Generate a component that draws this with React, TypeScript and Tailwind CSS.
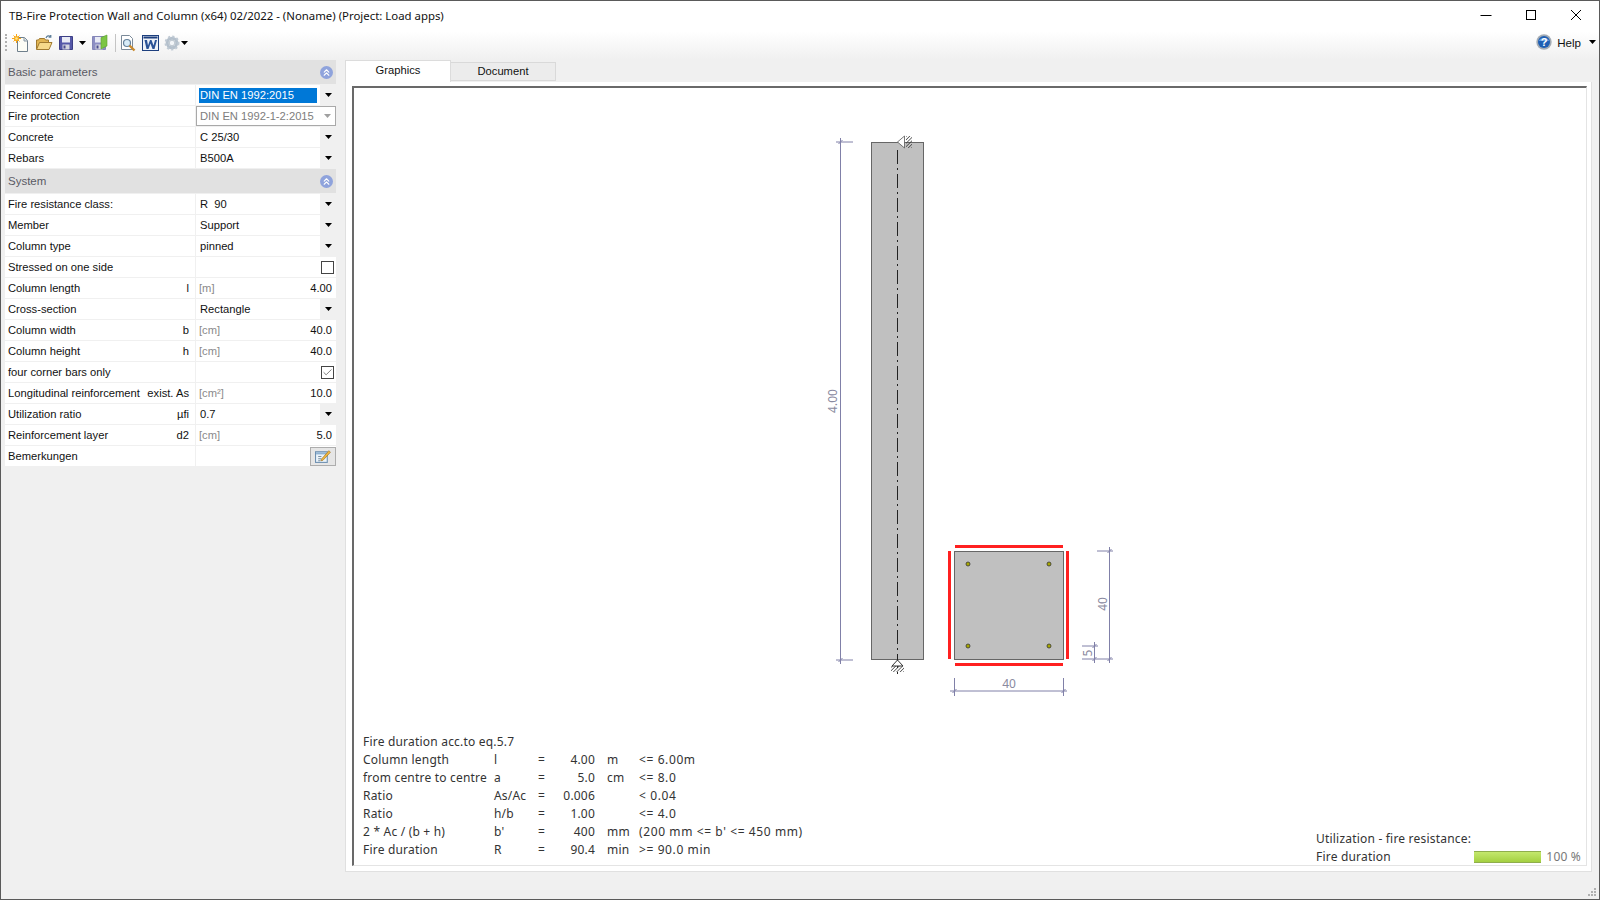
import { Check, ChevronsUp } from "lucide-react";

type Row = {
    label: string;
    sym?: string;
    unit?: string;
    value?: string;
    kind?: "select" | "selected" | "disabled" | "number" | "check" | "edit";
    checked?: boolean;
};

const basicRows: Row[] = [
    { label: "Reinforced Concrete", value: "DIN EN 1992:2015", kind: "selected" },
    { label: "Fire protection", value: "DIN EN 1992-1-2:2015", kind: "disabled" },
    { label: "Concrete", value: "C 25/30", kind: "select" },
    { label: "Rebars", value: "B500A", kind: "select" },
];

const systemRows: Row[] = [
    { label: "Fire resistance class:", value: "R  90", kind: "select" },
    { label: "Member", value: "Support", kind: "select" },
    { label: "Column type", value: "pinned", kind: "select" },
    { label: "Stressed on one side", kind: "check" },
    { label: "Column length", sym: "l", unit: "[m]", value: "4.00", kind: "number" },
    { label: "Cross-section", value: "Rectangle", kind: "select" },
    { label: "Column width", sym: "b", unit: "[cm]", value: "40.0", kind: "number" },
    { label: "Column height", sym: "h", unit: "[cm]", value: "40.0", kind: "number" },
    { label: "four corner bars only", kind: "check", checked: true },
    { label: "Longitudinal reinforcement", sym: "exist. As", unit: "[cm²]", value: "10.0", kind: "number" },
    { label: "Utilization ratio", sym: "µfi", value: "0.7", kind: "select" },
    { label: "Reinforcement layer", sym: "d2", unit: "[cm]", value: "5.0", kind: "number" },
    { label: "Bemerkungen", kind: "edit" },
];

const results = [
    ["Column length", "l", "=", "4.00", "m", "<= 6.00m"],
    ["from centre to centre", "a", "=", "5.0", "cm", "<= 8.0"],
    ["Ratio", "As/Ac", "=", "0.006", "", "< 0.04"],
    ["Ratio", "h/b", "=", "1.00", "", "<= 4.0"],
    ["2 * Ac / (b + h)", "b'", "=", "400", "mm", "(200 mm <= b' <= 450 mm)"],
    ["Fire duration", "R", "=", "90.4", "min", ">= 90.0 min"],
];

function Caret({ light }: { light?: boolean }) {
    return (
        <svg width="7" height="4" viewBox="0 0 7 4">
            <path d="M0 0h7L3.5 4z" fill={light ? "#a0a0a0" : "#000"} />
        </svg>
    );
}

function NewIcon() {
    return (
        <svg width="18" height="18" viewBox="0 0 18 18">
            <path d="M5.5 3.5h7l3 3v11h-10z" fill="#fdfdf6" stroke="#6f7f8c" />
            <path d="M12 3.5v3.5h3.5" fill="#dfe6ea" stroke="#8a98a3" />
            <circle cx="4.5" cy="4.5" r="2.6" fill="#f7b521" />
            <path d="M4.5 0v9M0 4.5h9M1.5 1.5l6 6M7.5 1.5l-6 6" stroke="#f9a51a" strokeWidth="1" />
            <circle cx="4.5" cy="4.5" r="1.3" fill="#ffe98a" />
        </svg>
    );
}

function OpenIcon() {
    return (
        <svg width="18" height="18" viewBox="0 0 18 18">
            <path d="M1.5 15V6h2l1-1.5h5L10.500 6h3v9z" fill="#e2b654" stroke="#a07a30" />
            <path d="M1.500 15.500l3-7h12.500l-3 7z" fill="#f6d98a" stroke="#a07a30" />
            <path d="M11 4c1-2.500 3-2.800 4.500-1.500M15.800 1v2.200h-2.200" fill="none" stroke="#5e7f9a" strokeWidth="1.200" />
        </svg>
    );
}

function SaveIcon({ green }: { green?: boolean }) {
    return (
        <svg width="18" height="18" viewBox="0 0 18 18">
            <path d="M1.500 2.500h13v13h-13z" fill={green ? "#8d8fc4" : "#5558a8"} stroke={green ? "#8587b8" : "#3d3f86"} />
            <rect x="4" y="3" width="8" height="5.500" fill="#e9ebf5" />
            <rect x="4.500" y="10.500" width="7" height="5" fill="#d4d5de" />
            <rect x="5.500" y="11.500" width="2" height="3" fill="#4a4c90" />
            {green && <path d="M10 3.500l6-2.500v11l-6 3z" fill="#7cc544" stroke="#5b9e2c" strokeWidth="0.600" />}
        </svg>
    );
}

function PreviewIcon() {
    return (
        <svg width="18" height="18" viewBox="0 0 18 18">
            <path d="M2.500 1.500h8l3 3v11h-11z" fill="#fff" stroke="#7b8a99" />
            <circle cx="8" cy="9" r="3.500" fill="#d8ecf8" stroke="#64809a" strokeWidth="1.200" />
            <path d="M10.500 11.500l5 5" stroke="#c98a2e" strokeWidth="2.400" />
        </svg>
    );
}

function WordIcon() {
    return (
        <svg width="17" height="16" viewBox="0 0 17 16">
            <rect x="0.500" y="0.500" width="16" height="15" fill="#eef2f8" stroke="#1d3f7e" />
            <rect x="1.500" y="1.500" width="14" height="2" fill="#1d3f7e" />
            <path d="M2.500 5l2 9h2l2-5.500 2 5.500h2l2.500-9h-2l-1.500 5.500-2-5.500h-1.500l-2 5.500-1-5.500z" fill="#2a5296" />
        </svg>
    );
}

function GearIcon() {
    return (
        <svg width="16" height="16" viewBox="0 0 16 16">
            <circle cx="8" cy="8" r="4.800" fill="none" stroke="#b4c0cc" strokeWidth="3" />
            <circle cx="8" cy="8" r="6.500" fill="none" stroke="#c0cad4" strokeWidth="2" strokeDasharray="2.200 2.100" />
            <circle cx="8" cy="8" r="2.800" fill="#f2f5f8" stroke="#93a2b2" strokeWidth="0.600" />
        </svg>
    );
}

function HelpIcon() {
    return (
        <svg width="16" height="16" viewBox="0 0 16 16">
            <circle cx="8" cy="8" r="7.700" fill="#a3abb4" />
            <circle cx="8" cy="8" r="6" fill="#1f5fb4" />
            <path d="M2.800 7a5.400 4.200 0 0 1 10.400 0z" fill="#5f9be0" />
            <text x="8" y="12" textAnchor="middle" fontSize="11" fontWeight="700" fill="#fff" fontFamily="'Liberation Sans', sans-serif">?</text>
        </svg>
    );
}

function EditIcon() {
    return (
        <svg width="16" height="14" viewBox="0 0 15 13">
            <rect x="0.500" y="2.500" width="11" height="10" fill="#eaf3fa" stroke="#6d8fb0" />
            <rect x="1" y="3" width="10" height="2" fill="#8fb2d2" />
            <path d="M3 7h3M3 9h3M3 11h2" stroke="#7a8fa3" />
            <path d="M6 9.500L13 1.500l1.500 1.500L7.500 10.500 5.500 11z" fill="#f1b73c" stroke="#9b6f24" strokeWidth="0.600" />
        </svg>
    );
}

function SectionHeader({ title }: { title: string }) {
    return (
        <div className="flex h-6 items-center justify-between bg-[#e1e1e1] pl-[3px] pr-[3px] text-[11.5px] text-[#5a5a64]">
            <span className="pt-px">{title}</span>
            <span className="flex h-[13px] w-[13px] items-center justify-center rounded-full bg-[#8fa3dc] text-white">
                <ChevronsUp size={11} strokeWidth={2.5} />
            </span>
        </div>
    );
}

function PropValue({ row }: { row: Row }) {
    if (row.kind === "selected") {
        return (
            <div className="flex h-full flex-1 items-center">
                <div className="ml-[3px] flex h-[15px] flex-1 items-center bg-[#0078d7] pl-[1px] text-white">{row.value}</div>
                <div className="ml-[3px] flex h-full w-4 items-center justify-center bg-[#f0f0f0]"><Caret /></div>
            </div>
        );
    }
    if (row.kind === "disabled") {
        return (
            <div className="flex h-full flex-1 items-center border border-[#a9a9a9] pl-[3px] text-[#7d7d7d]">
                <span className="flex-1 whitespace-nowrap">{row.value}</span>
                <span className="flex w-4 justify-center"><Caret light /></span>
            </div>
        );
    }
    if (row.kind === "select") {
        return (
            <div className="flex h-full flex-1 items-center pl-[4px]">
                <span className="flex-1 whitespace-pre pt-px">{row.value}</span>
                <div className="flex h-full w-4 items-center justify-center bg-[#f0f0f0]"><Caret /></div>
            </div>
        );
    }
    if (row.kind === "number") {
        return (
            <div className="flex flex-1 items-center justify-between pl-[3px] pr-[4px]">
                <span className="text-[#8a8a8a]">{row.unit}</span>
                <span>{row.value}</span>
            </div>
        );
    }
    if (row.kind === "check") {
        return (
            <div className="flex flex-1 justify-end pr-[2px]">
                <span className="flex h-[13px] w-[13px] items-center justify-center border border-[#444] bg-white text-[#444]">
                    {row.checked && <Check size={11} strokeWidth={1.5} />}
                </span>
            </div>
        );
    }
    return (
        <div className="flex h-full flex-1 items-center justify-end">
            <span className="flex h-[19px] w-[26px] items-center justify-center border border-[#adadad] bg-[#e6e6e6]"><EditIcon /></span>
        </div>
    );
}

function PropRow({ row }: { row: Row }) {
    return (
        <div className="flex h-5 items-center bg-white text-[11.2px] text-[#111]">
            <div className="flex h-full w-[190px] items-center justify-between whitespace-pre pl-[3px] pr-[6px]">
                <span>{row.label}</span>
                {row.sym && <span>{row.sym}</span>}
            </div>
            <div className="h-full w-px bg-[#f0f0f0]" />
            <PropValue row={row} />
        </div>
    );
}

function Drawing() {
    const dim = "#8080a8";
    const axis = [];
    for (let y = 150; y < 655; y += 24) {
        axis.push(`M897.5 ${y}v14`, `M897.5 ${y + 18}v2`);
    }
    const dimText = { fill: "#8a8aa0", fontSize: 12, fontFamily: "'Noto Sans', sans-serif" };
    return (
        <svg className="block" width="1232" height="640" viewBox="354 88 1232 640">
            <defs>
                <pattern id="hatch" width="2.400" height="2.400" patternUnits="userSpaceOnUse" patternTransform="rotate(45)">
                    <path d="M0 0v2.400" stroke="#333" strokeWidth="1.300" />
                </pattern>
            </defs>
            {/* column elevation */}
            <rect x="871.500" y="142.500" width="52" height="517" fill="#c0c0c0" stroke="#666" />
            <path d={axis.join("")} stroke="#222" fill="none" />
            <path d="M897.500 142l7-6v12z" fill="#fff" stroke="#555" strokeWidth="0.800" />
            <rect x="906" y="136" width="6" height="12" fill="url(#hatch)" />
            <path d="M897.500 660l-5.500 6h11z" fill="#fff" stroke="#333" />
            <rect x="891" y="666" width="13" height="6" fill="url(#hatch)" />
            {/* length dimension */}
            <path d="M840.500 138v526M836 142h17M836 660h17" stroke={dim} fill="none" />
            <path d="M838.500 144l4-4M838.500 662l4-4" stroke={dim} />
            <text {...dimText} transform="translate(837 401) rotate(-90)" textAnchor="middle">4.00</text>
            {/* section */}
            <rect x="954.500" y="551.500" width="109" height="108" fill="#c0c0c0" stroke="#666" />
            <path d="M955 545h108v3h-108zM955 663h108v3h-108zM948 551h3v108h-3zM1066 551h3v108h-3z" fill="#ff2020" />
            {[[968, 564], [1049, 564], [968, 646], [1049, 646]].map(([x, y]) => (
                <circle key={`${x}-${y}`} cx={x} cy={y} r="2" fill="#a8a800" stroke="#333" strokeWidth="0.800" />
            ))}
            {/* section dimensions */}
            <path d="M1109.500 547v116M1097 551h16M1094.500 642v21M1082 646h16M1082 659h31" stroke={dim} fill="none" />
            <path d="M1107.500 553l4-4M1107.500 661l4-4M1092.500 648l4-4M1092.500 661l4-4" stroke={dim} />
            <text {...dimText} transform="translate(1107 604) rotate(-90)" textAnchor="middle">40</text>
            <text {...dimText} transform="translate(1092 653) rotate(-90)" textAnchor="middle">5</text>
            <path d="M954.500 678v18M1063.500 678v18M950 691h117" stroke={dim} fill="none" />
            <path d="M952.500 693l4-4M1061.500 693l4-4" stroke={dim} />
            <text {...dimText} x="1009" y="688" textAnchor="middle">40</text>
        </svg>
    );
}

export default function App() {
    return (
        <div className="relative flex h-[900px] w-[1600px] flex-col overflow-hidden border border-[#5a5a5a] bg-[#f0f0f0] font-['Liberation_Sans',sans-serif]">
            <div className="flex h-[30px] shrink-0 items-center justify-between bg-white pl-2 font-['Noto_Sans',sans-serif] text-[11.4px] text-[#111]">
                <span>TB-Fire Protection Wall and Column (x64) 02/2022 - (Noname) (Project: Load apps)</span>
                <div className="mb-[2px] flex items-center gap-[29px] pr-[15px]">
                    <svg width="16" height="16" viewBox="0 0 16 16"><path d="M2.500 8.500h11" stroke="#000" /></svg>
                    <svg width="16" height="16" viewBox="0 0 16 16"><rect x="3.500" y="3.500" width="9" height="9" fill="none" stroke="#000" /></svg>
                    <svg width="16" height="16" viewBox="0 0 16 16"><path d="M3 3l10 10M13 3L3 13" stroke="#000" /></svg>
                </div>
            </div>

            <div className="flex h-[29px] shrink-0 items-center justify-between bg-gradient-to-b from-white to-[#f0f0f0] pb-[6px] pl-[4px] pr-[3px]">
                <div className="flex items-center">
                    <span className="mr-[5px] h-[17px] w-[2px] border-l-2 border-dotted border-[#b0b0b0]" />
                    <NewIcon />
                    <span className="w-[5px]" />
                    <OpenIcon />
                    <span className="w-[5px]" />
                    <SaveIcon />
                    <span className="ml-[3px] mr-[5px]"><Caret /></span>
                    <SaveIcon green />
                    <span className="ml-[6px] mr-[3px] h-[18px] w-px bg-[#c4c4c4]" />
                    <PreviewIcon />
                    <span className="w-[5px]" />
                    <WordIcon />
                    <span className="w-[5px]" />
                    <GearIcon />
                    <span className="ml-[1px]"><Caret /></span>
                </div>
                <div className="flex items-center text-[11.6px] text-[#111]">
                    <HelpIcon />
                    <span className="ml-[5px]">Help</span>
                    <span className="ml-[8px]"><Caret /></span>
                </div>
            </div>

            <div className="flex min-h-0 flex-1 pl-1">
                <div className="w-[331px] shrink-0">
                    <SectionHeader title="Basic parameters" />
                    <div className="flex flex-col gap-px pt-px">
                        {basicRows.map((row) => <PropRow key={row.label} row={row} />)}
                    </div>
                    <div className="pt-px"><SectionHeader title="System" /></div>
                    <div className="flex flex-col gap-px pt-px">
                        {systemRows.map((row) => <PropRow key={row.label} row={row} />)}
                    </div>
                </div>

                <div className="ml-[9px] flex min-w-0 flex-1 flex-col pr-[7px] pb-[27px]">
                    <div className="flex h-[22px] shrink-0 items-end text-[11.2px] text-[#111]">
                        <div className="z-10 flex h-[22px] w-[106px] items-start justify-center border border-b-0 border-[#dcdcdc] bg-white pt-[1px]">Graphics</div>
                        <div className="mb-px flex h-[19px] w-[105px] items-center justify-center border border-l-0 border-[#d9d9d9] bg-[#ececec]">Document</div>
                    </div>
                    <div className="flex min-h-0 flex-1 border border-t-0 border-[#e0e0e0] bg-white pt-1 pb-[5px] pl-[6px] pr-[4px]">
                        <div className="flex min-w-0 flex-1 flex-col justify-between overflow-hidden border-t-2 border-l-2 border-r border-b border-t-[#696969] border-l-[#696969] border-r-[#e4e4e4] border-b-[#e4e4e4]">
                            <Drawing />
                            <div className="flex items-end justify-between pb-px pl-[9px] pr-[5px] font-['Noto_Sans',sans-serif] text-[12px] leading-[18px] tracking-[0.2px] text-[#333]">
                                <div className="pb-[5px]">
                                    <div>Fire duration acc.to eq.5.7</div>
                                    {results.map((r) => (
                                        <div key={r[0] + r[1]} className="flex whitespace-pre">
                                            <span className="w-[131px]">{r[0]}</span>
                                            <span className="w-[44px]">{r[1]}</span>
                                            <span className="w-[20px]">{r[2]}</span>
                                            <span className="w-[37px] text-right">{r[3]}</span>
                                            <span className="ml-3 w-[32px]">{r[4]}</span>
                                            <span className="tracking-[0.6px]">{r[5]}</span>
                                        </div>
                                    ))}
                                </div>
                                <div className="-mb-[2px] w-[265px] whitespace-nowrap">
                                    <div>Utilization - fire resistance:</div>
                                    <div className="flex items-center">
                                        <span className="w-[158px]">Fire duration</span>
                                        <span className="h-[12px] w-[68px] border-y border-[#8fae4c] bg-gradient-to-b from-[#c4e86c] to-[#a4d040]" />
                                        <span className="ml-[5px] text-[#777]">100 %</span>
                                    </div>
                                </div>
                            </div>
                        </div>
                    </div>
                </div>
            </div>

            {/* size grip */}
            <div className="absolute bottom-[3px] right-[3px] grid grid-cols-3 gap-px">
                {[0, 0, 1, 0, 1, 1, 1, 1, 1].map((on, i) => (
                    <span key={i} className={on ? "h-[2px] w-[2px] bg-[#b0b0b0]" : "h-[2px] w-[2px]"} />
                ))}
            </div>
        </div>
    );
}
